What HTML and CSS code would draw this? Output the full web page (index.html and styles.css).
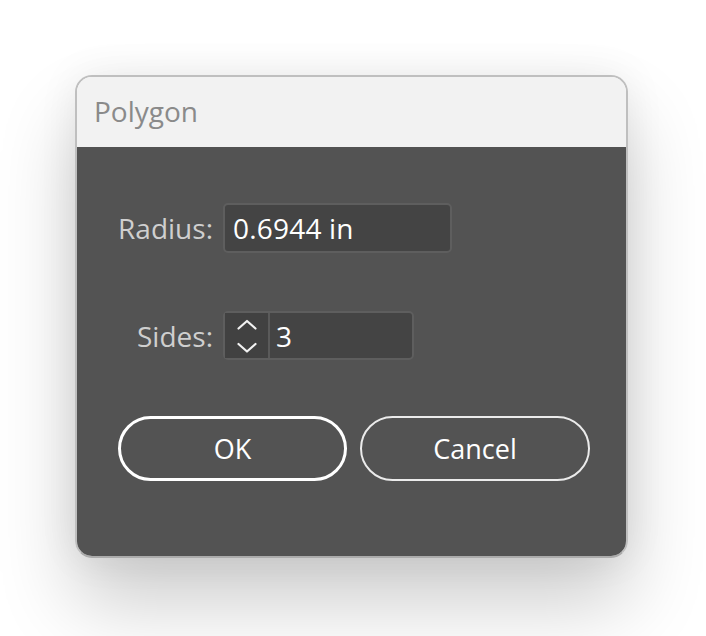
FILE: index.html
```html
<!DOCTYPE html>
<html>
<head>
<meta charset="utf-8">
<link rel="stylesheet" href="styles.css">
</head>
<body>
<div class="dialog">
  <div class="titlebar">Polygon</div>
  <div class="content">
    <div class="fields">
      <label class="lbl">Radius:</label>
      <div class="field field-radius">0.6944 in</div>
      <label class="lbl">Sides:</label>
      <div class="field field-sides">
        <div class="stepper">
          <svg width="20" height="34" viewBox="0 0 20 34">
            <path d="M1.5 9.5 L10 2 L18.5 9.5" fill="none" stroke="#f2f2f2" stroke-width="2.2" stroke-linecap="round" stroke-linejoin="round"/>
            <path d="M1.5 25 L10 32.5 L18.5 25" fill="none" stroke="#f2f2f2" stroke-width="2.2" stroke-linecap="round" stroke-linejoin="round"/>
          </svg>
        </div>
        <div class="num">3</div>
      </div>
    </div>
    <div class="buttons">
      <button class="btn btn-ok">OK</button>
      <button class="btn btn-cancel">Cancel</button>
    </div>
  </div>
</div>
</body>
</html>
```

FILE: styles.css
```css
html, body {
  margin: 0;
  padding: 0;
  background: #ffffff;
}
body {
  min-height: 636px;
  box-sizing: border-box;
  padding: 75px 0 0 75px;
  font-family: "Open Sans", "Noto Sans", sans-serif;
}
.dialog {
  width: 549px;
  border: 2px solid #bfbfbf;
  border-bottom-color: #ababab;
  border-radius: 17px;
  overflow: hidden;
  box-shadow: 0 45px 80px rgba(0,0,0,0.2), 0 0 40px rgba(0,0,0,0.07);
}
.titlebar {
  height: 70px;
  background: #f2f2f2;
  color: #8a8a8a;
  font-size: 28px;
  display: flex;
  align-items: center;
  padding-left: 17px;
  padding-bottom: 2px;
  box-sizing: border-box;
}
.content {
  background: #535353;
  height: 409px;
  box-sizing: border-box;
  padding: 56px 0 0 41px;
}
.fields {
  display: grid;
  grid-template-columns: 95px auto;
  column-gap: 10px;
  row-gap: 58px;
  align-items: center;
  justify-items: start;
}
.lbl {
  justify-self: end;
  color: #cfcfcf;
  font-size: 28px;
  line-height: 30px;
}
.field {
  box-sizing: border-box;
  height: 50px;
  border: 2px solid #5e5e5e;
  border-radius: 5px;
  background: #444444;
  color: #ffffff;
  font-size: 28px;
  display: flex;
  align-items: center;
}
.field-radius {
  width: 229px;
  padding-left: 8px;
  letter-spacing: 0.2px;
}
.field-sides {
  width: 191px;
  height: 49px;
}
.stepper {
  width: 43px;
  height: 100%;
  border-right: 2px solid #5a5a5a;
  background: #414141;
  display: flex;
  align-items: center;
  justify-content: center;
}
.num {
  padding-left: 6px;
}
.buttons {
  display: flex;
  gap: 13px;
  margin-top: 56px;
}
.btn {
  font-family: "Open Sans", "Noto Sans", sans-serif;
  font-size: 27px;
  color: #ffffff;
  background: transparent;
  box-sizing: border-box;
  height: 65px;
  border-radius: 33px;
  padding: 0;
}
.btn-ok {
  width: 229px;
  border: 3.5px solid #ffffff;
}
.btn-cancel {
  width: 230px;
  border: 2px solid #ebebeb;
}
```
